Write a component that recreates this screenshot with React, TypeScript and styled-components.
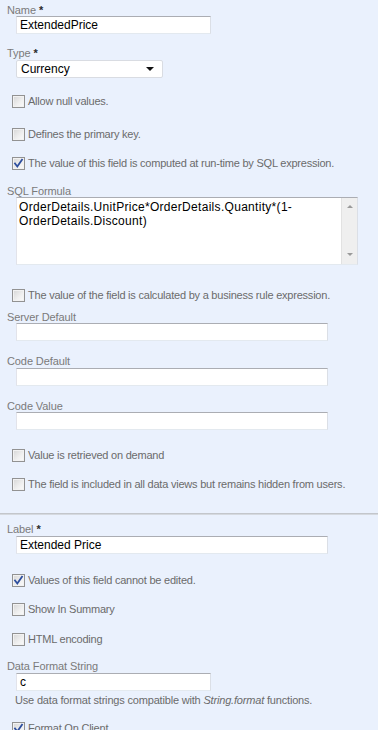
import React from 'react';
import styled, { createGlobalStyle } from 'styled-components';

const Global = createGlobalStyle`
  html, body { margin: 0; padding: 0; background: #eaf1fd; }
  body { font-family: "Liberation Sans", Arial, sans-serif; }
`;

const Page = styled.div`
  width: 378px;
  height: 730px;
  overflow: hidden;
  background: #eaf1fd;
  padding-top: 4px;
  box-sizing: border-box;
`;

const FieldLabel = styled.div<{ $top?: number }>`
  margin: ${(p) => p.$top ?? 0}px 0 0 7px;
  font-size: 11px;
  line-height: 12px;
  height: 12px;
  color: #7a7a7a;
  letter-spacing: -0.1px;
`;

const Star = styled.span`
  color: #2a2a2a;
  font-weight: bold;
  margin-left: 3px;
`;

const TextBox = styled.div<{ $top?: number; $w: number }>`
  margin: ${(p) => p.$top ?? 0}px 0 0 16px;
  width: ${(p) => p.$w}px;
  height: 18px;
  box-sizing: border-box;
  border: 1px solid;
  border-color: #abadb3 #dbdfe6 #e3e9ef #e2e3ea;
  background: #fff;
  font-size: 12px;
  line-height: 16px;
  color: #000;
  padding: 0 3px;
  white-space: nowrap;
`;

const SelectBox = styled.div<{ $top?: number }>`
  margin: ${(p) => p.$top ?? 0}px 0 0 16px;
  width: 147px;
  height: 18px;
  box-sizing: border-box;
  border: 1px solid #d9dce2;
  border-radius: 2px;
  background: #fff;
  font-size: 12px;
  line-height: 16px;
  color: #000;
  padding: 0 8px 0 4px;
  display: flex;
  align-items: center;
  justify-content: space-between;
`;

const Arrow = styled.span`
  width: 0;
  height: 0;
  border-left: 4px solid transparent;
  border-right: 4px solid transparent;
  border-top: 4px solid #111;
`;

const AreaBox = styled.div<{ $top?: number }>`
  margin: ${(p) => p.$top ?? 0}px 0 0 16px;
  width: 342px;
  height: 68px;
  box-sizing: border-box;
  border: 1px solid;
  border-color: #abadb3 #dbdfe6 #e3e9ef #e2e3ea;
  background: #fff;
  display: flex;
`;

const AreaText = styled.div`
  flex: 1;
  font-size: 12px;
  line-height: 14px;
  letter-spacing: 0.3px;
  padding: 2px 2px;
  color: #000;
  white-space: pre-wrap;
`;

const ScrollTrack = styled.div`
  width: 16px;
  background: #efefef;
  border-left: 1px solid #e2e2e2;
  display: flex;
  flex-direction: column;
  justify-content: space-between;
  align-items: center;
  padding: 7px 0 8px;
  box-sizing: border-box;
`;

const ScrollArrow = styled.span<{ $up?: boolean }>`
  width: 0;
  height: 0;
  border-left: 3px solid transparent;
  border-right: 3px solid transparent;
  ${(p) => (p.$up ? 'border-bottom: 3px solid #9a9a9a;' : 'border-top: 3px solid #9a9a9a;')}
`;

const CheckRow = styled.div<{ $top?: number }>`
  margin: ${(p) => p.$top ?? 0}px 0 0 12px;
  height: 13px;
  display: flex;
  align-items: center;
  gap: 3px;
  font-size: 11px;
  line-height: 13px;
  letter-spacing: -0.22px;
  color: #6b6b6b;
  white-space: nowrap;
`;

const Box = styled.span`
  width: 13px;
  height: 13px;
  box-sizing: border-box;
  border: 1px solid #929292;
  background: linear-gradient(135deg, #d6d6d6 0%, #f0f0f0 60%, #fbfbfb 100%);
  box-shadow: inset 0 0 0 1px #f2f2f2;
  display: flex;
  align-items: center;
  justify-content: center;
  flex: none;
`;

const Divider = styled.div<{ $top?: number }>`
  margin-top: ${(p) => p.$top ?? 0}px;
  height: 2px;
  box-sizing: border-box;
  border-top: 1px solid #c3c6cb;
  border-bottom: 1px solid #d5d9df;
`;

const Help = styled.div<{ $top?: number }>`
  margin: ${(p) => p.$top ?? 0}px 0 0 15px;
  font-size: 11px;
  line-height: 14px;
  letter-spacing: -0.18px;
  color: #6b6b6b;
  white-space: nowrap;
`;

const Check = ({ top, checked, children }: { top: number; checked?: boolean; children: React.ReactNode }) => (
  <CheckRow $top={top}>
    <Box>
      {checked && (
        <svg width="11" height="11" viewBox="0 0 11 11">
          <path d="M2 5.5 L4.3 8.5 L9 1.8" fill="none" stroke="#2d4e9e" strokeWidth="1.8" strokeLinecap="square" />
        </svg>
      )}
    </Box>
    <span>{children}</span>
  </CheckRow>
);

export default function App() {
  return (
    <>
      <Global />
      <Page>
        <FieldLabel>Name<Star>*</Star></FieldLabel>
        <TextBox $w={195}>ExtendedPrice</TextBox>

        <FieldLabel $top={13}>Type<Star>*</Star></FieldLabel>
        <SelectBox $top={1}>
          <span>Currency</span>
          <Arrow />
        </SelectBox>

        <Check top={17}>Allow null values.</Check>
        <Check top={20}>Defines the primary key.</Check>
        <Check top={16} checked>The value of this field is computed at run-time by SQL expression.</Check>

        <FieldLabel $top={15}>SQL Formula</FieldLabel>
        <AreaBox>
          <AreaText>{'OrderDetails.UnitPrice*OrderDetails.Quantity*(1-\nOrderDetails.Discount)'}</AreaText>
          <ScrollTrack>
            <ScrollArrow $up />
            <ScrollArrow />
          </ScrollTrack>
        </AreaBox>

        <Check top={24}>The value of the field is calculated by a business rule expression.</Check>

        <FieldLabel $top={9}>Server Default</FieldLabel>
        <TextBox $w={312} />

        <FieldLabel $top={14}>Code Default</FieldLabel>
        <TextBox $top={1} $w={312} />

        <FieldLabel $top={14}>Code Value</FieldLabel>
        <TextBox $w={312} />

        <Check top={19}>Value is retrieved on demand</Check>
        <Check top={16}>The field is included in all data views but remains hidden from users.</Check>

        <Divider $top={22} />

        <FieldLabel $top={8}>Label<Star>*</Star></FieldLabel>
        <TextBox $top={1} $w={312}>Extended Price</TextBox>

        <Check top={20} checked>Values of this field cannot be edited.</Check>
        <Check top={16}>Show In Summary</Check>
        <Check top={17}>HTML encoding</Check>

        <FieldLabel $top={14}>Data Format String</FieldLabel>
        <TextBox $top={1} $w={195}>c</TextBox>
        <Help $top={2}>
          Use data format strings compatible with <i>String.format</i> functions.
        </Help>

        <Check top={15} checked>Format On Client</Check>
      </Page>
    </>
  );
}
